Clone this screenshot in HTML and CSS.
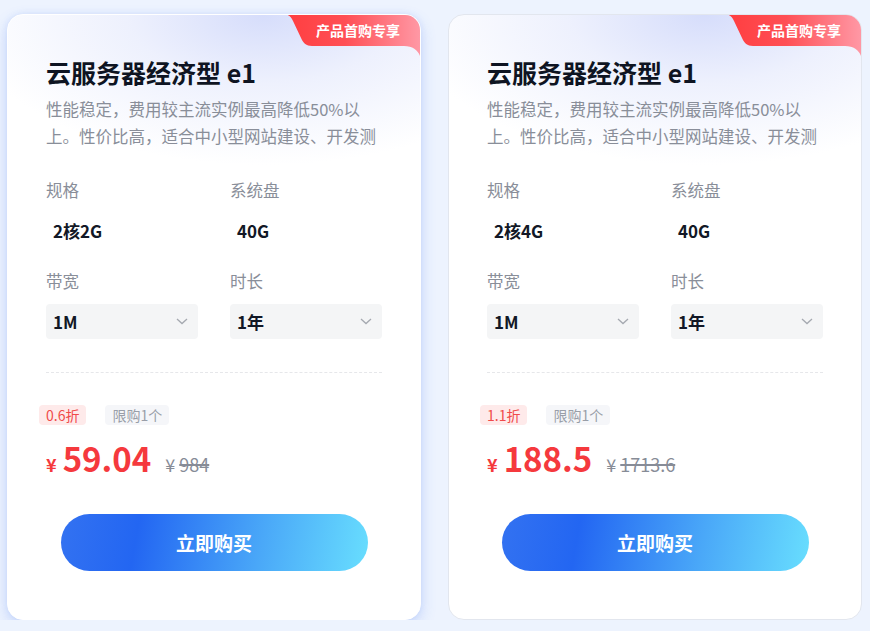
FILE: index.html
```html
<!DOCTYPE html>
<html lang="zh-CN">
<head>
<meta charset="utf-8">
<title>云服务器经济型 e1</title>
<link rel="stylesheet" href="styles.css">
</head>
<body>
<div class="page">
  <div class="card card-active">
    <div class="badge">
      <svg class="badge-shape" viewBox="0 0 138 48" width="138" height="48" aria-hidden="true">
        <defs>
          <linearGradient id="bg1" x1="0" y1="0" x2="1" y2="0">
            <stop offset="0" stop-color="#ff3d3f"/>
            <stop offset="0.45" stop-color="#ff4f55"/>
            <stop offset="1" stop-color="#ff99a6"/>
          </linearGradient>
        </defs>
        <path d="M0 0 H138 V48 C138 39 132 32 121 32 H29 C23 32 20.5 29 18.5 25 L10 7 C8 2.5 5 0 0 0 Z" fill="url(#bg1)"/>
      </svg>
      <span class="badge-text">产品首购专享</span>
    </div>
    <h2 class="title">云服务器经济型 e1</h2>
    <p class="desc">性能稳定，费用较主流实例最高降低50%以<br>上。性价比高，适合中小型网站建设、开发测</p>
    <div class="specs">
      <div class="field">
        <div class="label">规格</div>
        <div class="value">2核2G</div>
      </div>
      <div class="field">
        <div class="label">系统盘</div>
        <div class="value">40G</div>
      </div>
      <div class="field">
        <div class="label">带宽</div>
        <div class="value select"><span>1M</span>
          <svg class="chev" viewBox="0 0 12 7" width="12" height="7" aria-hidden="true"><path d="M1 1 L6 5.6 L11 1" fill="none" stroke="#a5a9b0" stroke-width="1.3"/></svg>
        </div>
      </div>
      <div class="field">
        <div class="label">时长</div>
        <div class="value select"><span>1年</span>
          <svg class="chev" viewBox="0 0 12 7" width="12" height="7" aria-hidden="true"><path d="M1 1 L6 5.6 L11 1" fill="none" stroke="#a5a9b0" stroke-width="1.3"/></svg>
        </div>
      </div>
    </div>
    <div class="divider"></div>
    <div class="tags">
      <span class="tag tag-red">0.6折</span>
      <span class="tag tag-gray">限购1个</span>
    </div>
    <div class="price">
      <span class="yen">¥</span><span class="amount">59.04</span>
      <span class="orig">¥ <s>984</s></span>
    </div>
    <button class="buy">立即购买</button>
  </div>

  <div class="card card-plain">
    <div class="badge">
      <svg class="badge-shape" viewBox="0 0 138 48" width="138" height="48" aria-hidden="true">
        <defs>
          <linearGradient id="bg2" x1="0" y1="0" x2="1" y2="0">
            <stop offset="0" stop-color="#ff3d3f"/>
            <stop offset="0.45" stop-color="#ff4f55"/>
            <stop offset="1" stop-color="#ff99a6"/>
          </linearGradient>
        </defs>
        <path d="M0 0 H138 V48 C138 39 132 32 121 32 H29 C23 32 20.5 29 18.5 25 L10 7 C8 2.5 5 0 0 0 Z" fill="url(#bg2)"/>
      </svg>
      <span class="badge-text">产品首购专享</span>
    </div>
    <h2 class="title">云服务器经济型 e1</h2>
    <p class="desc">性能稳定，费用较主流实例最高降低50%以<br>上。性价比高，适合中小型网站建设、开发测</p>
    <div class="specs">
      <div class="field">
        <div class="label">规格</div>
        <div class="value">2核4G</div>
      </div>
      <div class="field">
        <div class="label">系统盘</div>
        <div class="value">40G</div>
      </div>
      <div class="field">
        <div class="label">带宽</div>
        <div class="value select"><span>1M</span>
          <svg class="chev" viewBox="0 0 12 7" width="12" height="7" aria-hidden="true"><path d="M1 1 L6 5.6 L11 1" fill="none" stroke="#a5a9b0" stroke-width="1.3"/></svg>
        </div>
      </div>
      <div class="field">
        <div class="label">时长</div>
        <div class="value select"><span>1年</span>
          <svg class="chev" viewBox="0 0 12 7" width="12" height="7" aria-hidden="true"><path d="M1 1 L6 5.6 L11 1" fill="none" stroke="#a5a9b0" stroke-width="1.3"/></svg>
        </div>
      </div>
    </div>
    <div class="divider"></div>
    <div class="tags">
      <span class="tag tag-red">1.1折</span>
      <span class="tag tag-gray">限购1个</span>
    </div>
    <div class="price">
      <span class="yen">¥</span><span class="amount">188.5</span>
      <span class="orig">¥ <s>1713.6</s></span>
    </div>
    <button class="buy">立即购买</button>
  </div>
</div>
</body>
</html>
```

FILE: styles.css
```css
html, body {
  margin: 0;
  padding: 0;
}
body {
  background: #edf3fe;
  font-family: "Noto Sans CJK SC", "Noto Sans", sans-serif;
  color: #141a26;
}
.page {
  display: flex;
  gap: 27px;
  padding: 14px 0 0 7px;
}
.card {
  position: relative;
  width: 414px;
  height: 606px;
  box-sizing: border-box;
  border-radius: 16px;
  overflow: hidden;
  padding: 41px 38px 0;
  background:
    radial-gradient(ellipse 300px 150px at 62% 0, rgba(214, 221, 251, 1) 0%, rgba(226, 231, 252, 0.6) 45%, rgba(255, 255, 255, 0) 100%),
    #ffffff;
}
.card-active {
  border: 1px solid #ffffff;
  box-shadow: 0 6px 16px rgba(56, 108, 240, 0.2), 0 0 6px rgba(56, 108, 240, 0.1);
}
.card-plain {
  border: 1px solid #e2e6ee;
}
.badge {
  position: absolute;
  top: -1px;
  right: -1px;
  width: 138px;
  height: 48px;
}
.badge-shape {
  position: absolute;
  top: 0;
  left: 0;
  display: block;
}
.badge-text {
  position: absolute;
  left: 33px;
  top: 0;
  height: 32px;
  line-height: 32px;
  font-size: 14px;
  font-weight: 700;
  color: #ffffff;
  white-space: nowrap;
}
.title {
  margin: 0;
  font-size: 25px;
  line-height: 32px;
  font-weight: 700;
  color: #0e1422;
}
.desc {
  margin: 8px 0 0;
  font-size: 16.5px;
  line-height: 27px;
  color: #898e99;
  white-space: nowrap;
}
.specs {
  margin-top: 28px;
  display: grid;
  grid-template-columns: 152px 152px;
  column-gap: 32px;
  row-gap: 21px;
}
.label {
  font-size: 16.5px;
  line-height: 24px;
  color: #898e99;
}
.value {
  margin-top: 11px;
  height: 35px;
  box-sizing: border-box;
  padding: 0 7px;
  display: flex;
  align-items: center;
  font-size: 17px;
  font-weight: 700;
  color: #121826;
}
.select {
  background: #f4f5f6;
  border-radius: 4px;
  justify-content: space-between;
  padding-right: 10px;
  font-size: 17px;
}
.chev {
  display: block;
}
.divider {
  margin-top: 33px;
  height: 0;
  border-top: 1px dashed #e6e7ea;
}
.tags {
  margin: 32px 0 0 -7px;
  display: flex;
  gap: 19px;
}
.tag {
  height: 20px;
  line-height: 20px;
  padding: 0 7px;
  font-size: 14px;
  border-radius: 4px;
}
.tag-red {
  background: #feeaea;
  color: #f04a4a;
}
.tag-gray {
  background: #f5f6f9;
  color: #999ea8;
}
.price {
  margin-top: 13px;
  display: flex;
  align-items: baseline;
  height: 40px;
  line-height: 40px;
}
.yen {
  font-size: 18px;
  font-weight: 700;
  color: #f5393d;
  margin-right: 6px;
}
.amount {
  font-size: 33px;
  font-weight: 700;
  color: #f5393d;
}
.orig {
  margin-left: 14px;
  font-size: 18px;
  color: #878c97;
}
.orig s {
  text-decoration-thickness: 1.5px;
}
.buy {
  display: block;
  margin: 36px auto 0;
  width: 307px;
  height: 57px;
  border: 0;
  border-radius: 29px;
  background: linear-gradient(100deg, #3372f1 0%, #2366f2 25%, #4aa8f8 65%, #68defe 100%);
  color: #ffffff;
  font-family: "Noto Sans CJK SC", sans-serif;
  font-size: 19px;
  font-weight: 700;
  cursor: pointer;
}
```
